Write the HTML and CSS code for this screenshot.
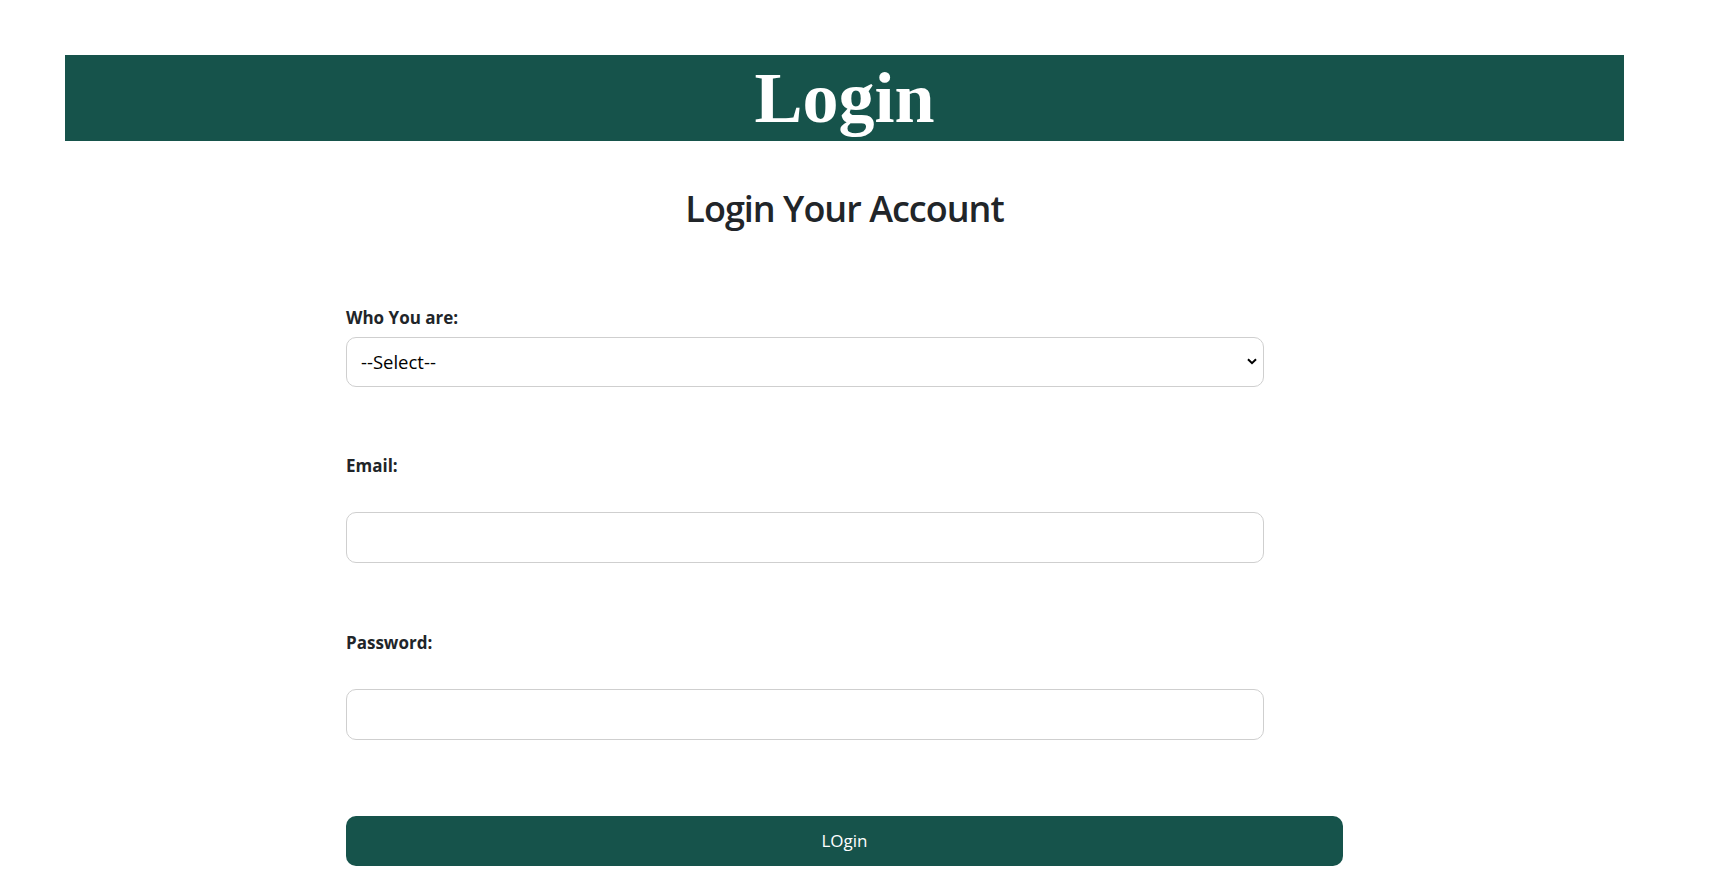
FILE: index.html
```html
<!DOCTYPE html>
<html lang="en">
<head>
<meta charset="utf-8">
<title>Login</title>
<link rel="stylesheet" href="styles.css">
</head>
<body>
<div class="page">
  <header class="banner">
    <h1 class="banner-title">Login</h1>
  </header>
  <h2 class="subtitle">Login Your Account</h2>
  <form class="login-form">
    <label class="field-label label-role" for="role">Who You are:</label>
    <select id="role" class="field-select">
      <option>--Select--</option>
      <option>Student</option>
      <option>Teacher</option>
      <option>Admin</option>
    </select>
    <label class="field-label label-email" for="email">Email:</label>
    <input id="email" type="email" class="field-input">
    <label class="field-label label-password" for="password">Password:</label>
    <input id="password" type="password" class="field-input">
    <button type="submit" class="submit-btn">LOgin</button>
  </form>
</div>
</body>
</html>
```

FILE: styles.css
```css
html, body {
  margin: 0;
  padding: 0;
  background: #ffffff;
}

body {
  font-family: "Open Sans", "Noto Sans", sans-serif;
  color: #212529;
}

.page {
  margin: 0 92px 0 65px;
  padding-top: 55px;
}

.banner {
  background: #16534b;
  height: 86px;
  display: flex;
  justify-content: center;
}

.banner-title {
  margin: 0;
  font-family: "Liberation Serif", "Times New Roman", serif;
  font-weight: 700;
  font-size: 72px;
  line-height: 86px;
  color: #ffffff;
}

.subtitle {
  margin: 46px 0 0;
  text-align: center;
  font-size: 36px;
  font-weight: 600;
  letter-spacing: -1px;
  line-height: 1.2;
  color: #212529;
}

.login-form {
  width: 997px;
  margin: 0 auto;
  display: flex;
  flex-direction: column;
  align-items: flex-start;
}

.field-label {
  display: block;
  font-size: 17px;
  font-weight: 700;
  line-height: 1.5;
  color: #212529;
}

.label-role {
  margin-top: 75px;
  margin-bottom: 6px;
}

.label-email {
  margin-top: 66px;
  margin-bottom: 34px;
}

.label-password {
  margin-top: 67px;
  margin-bottom: 33px;
}

.field-select,
.field-input {
  box-sizing: border-box;
  width: 918px;
  margin: 0;
  border: 1px solid #cfcfcf;
  border-radius: 10px;
  background-color: #ffffff;
  font-family: "Open Sans", "Noto Sans", sans-serif;
  color: #000000;
  outline: none;
}

.field-select {
  height: 50px;
  -webkit-appearance: none;
  appearance: none;
  padding: 0 30px 0 14px;
  font-size: 18.5px;
  background-image: url("data:image/svg+xml,%3Csvg xmlns='http://www.w3.org/2000/svg' width='10' height='7' viewBox='0 0 10 7'%3E%3Cpath d='M1 1.2 L5 5.2 L9 1.2' fill='none' stroke='%23000' stroke-width='2'/%3E%3C/svg%3E");
  background-repeat: no-repeat;
  background-position: right 6px center;
  background-size: 10px 7px;
}

.field-input {
  height: 51px;
  padding: 0 14px;
  font-size: 17px;
}

.submit-btn {
  margin-top: 76px;
  width: 997px;
  height: 50px;
  border: none;
  border-radius: 10px;
  background: #16534b;
  color: #ffffff;
  font-family: "Open Sans", "Noto Sans", sans-serif;
  font-size: 17px;
  cursor: pointer;
}
```
